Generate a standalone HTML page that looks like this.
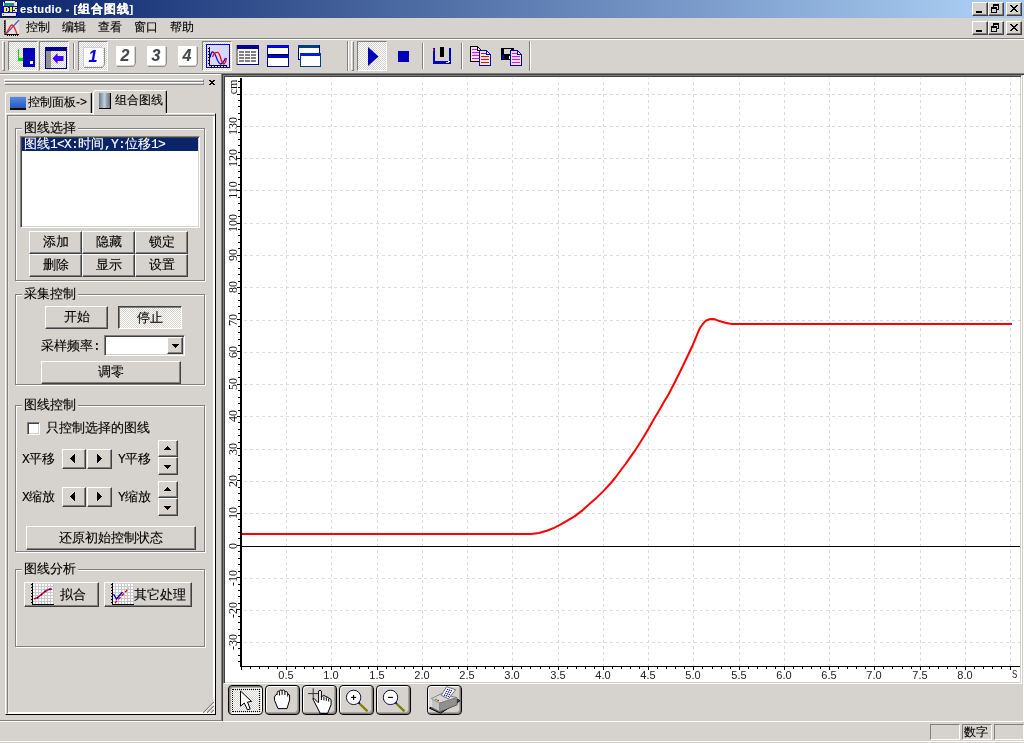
<!DOCTYPE html>
<html lang="zh"><head><meta charset="utf-8"><title>estudio - [组合图线]</title>
<style>
*{box-sizing:border-box;margin:0;padding:0}
html,body{width:1024px;height:743px;overflow:hidden;background:#d6d3ce}
body{position:relative;font-family:"Liberation Sans",sans-serif;font-size:12px;color:#000;line-height:1;-webkit-text-stroke:0.12px currentColor}
.a{position:absolute}
.t{position:absolute;white-space:nowrap;font-size:12px;line-height:12px;height:12px;overflow:visible}
.btn{position:absolute;background:#d6d3ce;border:1px solid;border-color:#fff #404040 #404040 #fff;box-shadow:inset -1px -1px 0 #808080;text-align:center;font-size:13px;white-space:nowrap;overflow:hidden}
.grp{position:absolute;border:1px solid #808080;box-shadow:1px 1px 0 #fff, inset 1px 1px 0 #fff}
.grp>span{position:absolute;left:6px;top:-8px;background:#d6d3ce;padding:0 2px 0 2px;font-size:13px;line-height:13px;white-space:nowrap}
.d{font-size:13px !important}
.m{font-family:"Liberation Mono",monospace;font-size:13px;letter-spacing:-0.8px}
.chk{background:repeating-conic-gradient(#fff 0 25%,#d6d3ce 0 50%) 0 0/2px 2px}
.tbp{position:absolute;border:1px solid;border-color:#808080 #fff #fff #808080}
.cap{position:absolute;width:16px;height:14px;background:#d6d3ce;border:1px solid;border-color:#fff #404040 #404040 #fff;box-shadow:inset -1px -1px 0 #808080}
.sep{position:absolute;width:2px;border-left:1px solid #808080;border-right:1px solid #fff}
.grip{position:absolute;width:3px;border:1px solid;border-color:#fff #808080 #808080 #fff}
.xl{-webkit-text-stroke:0;position:absolute;top:669px;width:40px;margin-left:-20px;text-align:center;font-size:11px;line-height:12px;color:#222}
.yl{-webkit-text-stroke:0;position:absolute;left:213px;width:40px;height:12px;margin-top:-6px;text-align:center;font-family:"Liberation Serif",serif;font-size:12px;line-height:12px;color:#111;transform:rotate(-90deg);transform-origin:50% 50%}
</style></head>
<body>
<div class="a" style="left:0;top:0;width:1024px;height:743px;will-change:transform">
<div class="a" style="left:0;top:0;width:1024px;height:18px;background:linear-gradient(90deg,#0a246a 0,#a6caf0 968px)"></div>
<svg class="a" style="left:2px;top:1px" width="16" height="16" viewBox="0 0 16 16" shape-rendering="crispEdges">
<rect x="0" y="1" width="16" height="14" fill="#0000a8"/><rect x="0" y="5" width="16" height="8" fill="#0000f8"/>
<rect x="3" y="0" width="10" height="2" fill="#f4f0e8"/><rect x="1" y="1" width="1" height="4" fill="#fff"/><rect x="14" y="1" width="1" height="4" fill="#fff"/>
<rect x="2" y="2" width="10" height="3" fill="#209080"/><rect x="12" y="1" width="2" height="4" fill="#e4dcd4"/><rect x="6" y="4" width="1" height="1" fill="#00ff00"/>
<path d="M2 6h4v1h1v3h-1v1h-4zM4 7v3h1v-3zM8 6h2v5h-2zM11 6h4v1h-2v1h2v3h-4v-1h2v-1h-2z" fill="#ffff00" fill-rule="evenodd"/>
<rect x="0" y="12" width="14" height="3" fill="#e8e4d8"/><rect x="1" y="13" width="1" height="1" fill="#00a000"/><rect x="1" y="15" width="13" height="1" fill="#101010"/></svg>
<div class="t" style="left:20px;top:3px;color:#fff;font-weight:bold;font-size:11px;letter-spacing:0.45px">estudio - [<span style="font-size:12px;letter-spacing:1px">组合图线</span>]</div>
<div class="cap" style="left:972px;top:2px"><div class="a" style="left:3px;top:8px;width:6px;height:2px;background:#000"></div></div><div class="cap" style="left:988px;top:2px"><div class="a" style="left:4px;top:1px;width:6px;height:6px;border:1px solid #000;border-top-width:2px"></div><div class="a" style="left:2px;top:4px;width:6px;height:6px;border:1px solid #000;border-top-width:2px;background:#d6d3ce"></div></div><div class="cap" style="left:1006px;top:2px"><svg class="a" style="left:3px;top:2px" width="8" height="7" viewBox="0 0 8 7" shape-rendering="crispEdges" fill="#000"><rect x="0" y="0" width="2" height="1"/><rect x="6" y="0" width="2" height="1"/><rect x="1" y="1" width="2" height="1"/><rect x="5" y="1" width="2" height="1"/><rect x="2" y="2" width="4" height="1"/><rect x="3" y="3" width="2" height="1"/><rect x="2" y="4" width="4" height="1"/><rect x="1" y="5" width="2" height="1"/><rect x="5" y="5" width="2" height="1"/><rect x="0" y="6" width="2" height="1"/><rect x="6" y="6" width="2" height="1"/></svg></div>
<svg class="a" style="left:4px;top:20px" width="16" height="16" viewBox="0 0 16 16">
<rect x="2" y="0" width="13" height="14" fill="#e4e2de"/><path d="M1 0v14.5h14" stroke="#000" stroke-width="1.2" fill="none"/><path d="M2 14L15 0" stroke="#5050c8" stroke-width="1.2"/><path d="M2 14C5 9 6 5 8 5s3 4 5 9" stroke="#f02020" stroke-width="1.3" fill="none"/>
<path d="M3 15.5h12" stroke="#000" stroke-dasharray="1 1"/><path d="M0.5 1v12" stroke="#000" stroke-dasharray="1 1"/></svg>
<div class="t" style="left:26px;top:21px">控制</div>
<div class="t" style="left:62px;top:21px">编辑</div>
<div class="t" style="left:98px;top:21px">查看</div>
<div class="t" style="left:134px;top:21px">窗口</div>
<div class="t" style="left:170px;top:21px">帮助</div>
<div class="cap" style="left:972px;top:21px"><div class="a" style="left:3px;top:8px;width:6px;height:2px;background:#000"></div></div><div class="cap" style="left:988px;top:21px"><div class="a" style="left:4px;top:1px;width:6px;height:6px;border:1px solid #000;border-top-width:2px"></div><div class="a" style="left:2px;top:4px;width:6px;height:6px;border:1px solid #000;border-top-width:2px;background:#d6d3ce"></div></div><div class="cap" style="left:1006px;top:21px"><svg class="a" style="left:3px;top:2px" width="8" height="7" viewBox="0 0 8 7" shape-rendering="crispEdges" fill="#000"><rect x="0" y="0" width="2" height="1"/><rect x="6" y="0" width="2" height="1"/><rect x="1" y="1" width="2" height="1"/><rect x="5" y="1" width="2" height="1"/><rect x="2" y="2" width="4" height="1"/><rect x="3" y="3" width="2" height="1"/><rect x="2" y="4" width="4" height="1"/><rect x="1" y="5" width="2" height="1"/><rect x="5" y="5" width="2" height="1"/><rect x="0" y="6" width="2" height="1"/><rect x="6" y="6" width="2" height="1"/></svg></div>
<div class="a" style="left:0;top:38px;width:1024px;height:1px;background:#808080"></div>
<div class="a" style="left:0;top:39px;width:1024px;height:1px;background:#fff"></div>
<div class="a" style="left:0;top:73px;width:1024px;height:1px;background:#808080"></div>
<div class="a" style="left:0;top:74px;width:221px;height:1px;background:#fff"></div>
<div class="grip" style="left:2px;top:41px;height:30px"></div>
<div class="sep" style="left:347px;top:41px;height:30px"></div>
<div class="grip" style="left:351px;top:41px;height:30px"></div>
<div class="sep" style="left:529px;top:41px;height:30px"></div>
<div class="tbp chk" style="left:8px;top:41px;width:30px;height:30px"></div>
<div class="tbp chk" style="left:39px;top:41px;width:30px;height:30px"></div>
<div class="tbp chk" style="left:78px;top:41px;width:30px;height:30px"></div>
<div class="tbp chk" style="left:202px;top:41px;width:30px;height:30px"></div>
<div class="tbp chk" style="left:357px;top:41px;width:30px;height:30px"></div>
<div class="sep" style="left:73px;top:43px;height:26px"></div>
<div class="sep" style="left:422px;top:43px;height:26px"></div>
<div class="sep" style="left:461px;top:43px;height:26px"></div>
<svg class="a" style="left:13px;top:45px" width="24" height="24" viewBox="0 0 24 24" shape-rendering="crispEdges">
<rect x="10" y="3" width="12" height="19" fill="#0000b4"/><rect x="17" y="16" width="3" height="3" fill="#fff"/>
<rect x="5" y="4" width="1" height="11" fill="#00e000"/><rect x="5" y="13" width="5" height="3" fill="#00e000"/></svg>
<svg class="a" style="left:44px;top:46px" width="24" height="23" viewBox="0 0 24 23">
<g shape-rendering="crispEdges"><rect x="1.500" y="1.500" width="21" height="21" fill="none" stroke="#00008c" stroke-width="1"/><rect x="1" y="1" width="22" height="4" fill="#00008c"/>
<rect x="2" y="5" width="5" height="17" fill="#909090"/></g><path d="M8.500 12.500l5-5.500v3h6v5h-6v3z" fill="#4000ff"/></svg>
<div class="a" style="left:83px;top:47px;width:22px;height:22px"><svg class="a" style="left:0;top:0" width="22" height="22" viewBox="0 0 22 22"><rect x="0" y="0" width="20" height="19" fill="#fff"/><path d="M21.5 1V17.500L19.5 20.500H1" stroke="#909090" fill="none"/><path d="M0.500 19V0.500H20" stroke="#ccccff" fill="none"/></svg><div class="a" style="left:0;top:0;width:20px;text-align:center;font:italic bold 16px/19px 'Liberation Sans',sans-serif;color:#0000e0">1</div></div>
<div class="a" style="left:116px;top:46px;width:22px;height:22px"><svg class="a" style="left:0;top:0" width="22" height="22" viewBox="0 0 22 22"><rect x="0" y="0" width="18" height="19" fill="#fff"/><path d="M19.5 1V17.500L17.5 20.500H1" stroke="#909090" fill="none"/></svg><div class="a" style="left:0;top:0;width:18px;text-align:center;font:italic bold 16px/19px 'Liberation Sans',sans-serif;color:#484848">2</div></div>
<div class="a" style="left:147px;top:46px;width:22px;height:22px"><svg class="a" style="left:0;top:0" width="22" height="22" viewBox="0 0 22 22"><rect x="0" y="0" width="18" height="19" fill="#fff"/><path d="M19.5 1V17.500L17.5 20.500H1" stroke="#909090" fill="none"/></svg><div class="a" style="left:0;top:0;width:18px;text-align:center;font:italic bold 16px/19px 'Liberation Sans',sans-serif;color:#484848">3</div></div>
<div class="a" style="left:178px;top:46px;width:22px;height:22px"><svg class="a" style="left:0;top:0" width="22" height="22" viewBox="0 0 22 22"><rect x="0" y="0" width="18" height="19" fill="#fff"/><path d="M19.5 1V17.500L17.5 20.500H1" stroke="#909090" fill="none"/></svg><div class="a" style="left:0;top:0;width:18px;text-align:center;font:italic bold 16px/19px 'Liberation Sans',sans-serif;color:#484848">4</div></div>
<svg class="a" style="left:206px;top:44px" width="24" height="24" viewBox="0 0 24 24">
<rect x="0.500" y="0.500" width="23" height="23" fill="#d8d8ff" stroke="#0000d0"/><path d="M3.500 3V21.500H21" stroke="#000" stroke-width="1" fill="none" shape-rendering="crispEdges"/><path d="M2.500 4V20M5 22.500H21" stroke="#000" stroke-width="1" stroke-dasharray="1 2" shape-rendering="crispEdges"/>
<path d="M4 13.500C5 9 6 7.500 7 8C10 9 11 19 14.500 20C17 20 18 17 19.500 14" stroke="#0000e0" stroke-width="1.300" fill="none"/><path d="M6.500 13C8 9 10 8 12 8.500C14.500 10 15 19 17.500 20C19 20 20 17 20.500 14" stroke="#f00000" stroke-width="1.300" fill="none"/></svg>
<svg class="a" style="left:236px;top:45px" width="24" height="21" viewBox="0 0 24 21" shape-rendering="crispEdges"><rect x="0" y="0" width="23" height="20" fill="#909090"/><rect x="1" y="0" width="22" height="4" fill="#00008c"/><rect x="2" y="4" width="20" height="15" fill="#fff"/><rect x="22" y="4" width="1" height="16" fill="#00008c"/><rect x="1" y="19" width="22" height="1" fill="#00008c"/><rect x="3" y="6" width="5" height="2" fill="#808080"/><rect x="9" y="6" width="5" height="2" fill="#808080"/><rect x="15" y="6" width="5" height="2" fill="#808080"/><rect x="3" y="9" width="5" height="2" fill="#808080"/><rect x="9" y="9" width="5" height="2" fill="#808080"/><rect x="15" y="9" width="5" height="2" fill="#808080"/><rect x="3" y="12" width="5" height="2" fill="#808080"/><rect x="9" y="12" width="5" height="2" fill="#808080"/><rect x="15" y="12" width="5" height="2" fill="#808080"/><rect x="3" y="15" width="5" height="2" fill="#808080"/><rect x="9" y="15" width="5" height="2" fill="#808080"/><rect x="15" y="15" width="5" height="2" fill="#808080"/></svg>
<svg class="a" style="left:267px;top:45px" width="23" height="23" viewBox="0 0 23 23" shape-rendering="crispEdges">
<rect x="0" y="0" width="22" height="22" fill="#00008c"/><rect x="0" y="0" width="22" height="3" fill="#0000e0"/><rect x="1" y="3" width="20" height="6" fill="#fff"/>
<rect x="0" y="9" width="22" height="1" fill="#000"/><rect x="0" y="10" width="22" height="3" fill="#0000e0"/><rect x="1" y="13" width="20" height="8" fill="#fff"/></svg>
<svg class="a" style="left:298px;top:45px" width="24" height="23" viewBox="0 0 24 23" shape-rendering="crispEdges">
<rect x="0" y="0" width="21" height="14" fill="#fff" stroke="#00008c"/><rect x="0" y="0" width="21" height="3" fill="#004080"/>
<rect x="2" y="8" width="21" height="14" fill="#fff"/><rect x="2" y="8" width="21" height="3" fill="#0020d0"/><path d="M2.5 8v13.5h20v-13.5" stroke="#004080" fill="none"/></svg>
<svg class="a" style="left:367px;top:47px" width="14" height="20" viewBox="0 0 14 20"><path d="M1 0L11.500 9.500L1 19z" fill="#0000b4"/></svg>
<div class="a" style="left:398px;top:51px;width:11px;height:11px;background:#0000b4"></div>
<svg class="a" style="left:432px;top:46px" width="20" height="19" viewBox="0 0 20 19" shape-rendering="crispEdges">
<rect x="1" y="2" width="2" height="16" fill="#0000b4"/><rect x="17" y="2" width="2" height="16" fill="#0000b4"/><rect x="1" y="15" width="18" height="3" fill="#0000b4"/>
<rect x="1" y="3" width="1" height="2" fill="#e00060"/><rect x="8" y="1" width="4" height="10" fill="#000"/><rect x="14" y="16" width="3" height="1" fill="#d0d0d0"/><rect x="16" y="15" width="2" height="1" fill="#fff"/></svg>
<svg class="a" style="left:470px;top:46px" width="24" height="22" viewBox="0 0 24 22" shape-rendering="crispEdges"><g transform="translate(0,0)"><path d="M0.500 0.500h7l4 4v11h-11z" fill="#ece9e2" stroke="#000"/><path d="M7.500 0.500v4h4" fill="none" stroke="#000"/><rect x="2" y="3" width="5" height="1" fill="#ff00ff"/><rect x="2" y="6" width="8" height="1" fill="#ff00ff"/><rect x="2" y="9" width="8" height="1" fill="#ff00ff"/><rect x="2" y="12" width="8" height="1" fill="#ff00ff"/></g><g transform="translate(9,4)"><path d="M0.500 0.500h7l4 4v11h-11z" fill="#ece9e2" stroke="#0000c0"/><path d="M7.500 0.500v4h4" fill="none" stroke="#0000c0"/><rect x="2" y="3" width="5" height="1" fill="#ff0000"/><rect x="2" y="6" width="8" height="1" fill="#ff0000"/><rect x="2" y="9" width="8" height="1" fill="#ff0000"/><rect x="2" y="12" width="8" height="1" fill="#ff0000"/></g></svg>
<svg class="a" style="left:501px;top:48px" width="24" height="20" viewBox="0 0 24 20" shape-rendering="crispEdges"><rect x="0" y="0" width="13" height="12" fill="#000"/><rect x="3" y="1" width="7" height="5" fill="#d6d3ce"/><rect x="1" y="7" width="2" height="4" fill="#0000e0"/><rect x="8" y="8" width="3" height="3" fill="#fff"/><g transform="translate(9,2)"><path d="M0.500 0.500h7l4 4v11h-11z" fill="#ece9e2" stroke="#0000c0"/><path d="M7.500 0.500v4h4" fill="none" stroke="#0000c0"/><rect x="2" y="3" width="5" height="1" fill="#ff00ff"/><rect x="2" y="6" width="8" height="1" fill="#ff00ff"/><rect x="2" y="9" width="8" height="1" fill="#ff00ff"/><rect x="2" y="12" width="8" height="1" fill="#ff00ff"/></g></svg>
<div class="a" style="left:4px;top:79px;width:200px;height:3px;border:1px solid;border-color:#fff #808080 #808080 #fff"></div>
<div class="a" style="left:4px;top:82px;width:200px;height:3px;border:1px solid;border-color:#fff #808080 #808080 #fff"></div>
<svg class="a" style="left:209px;top:80px" width="6" height="5" viewBox="0 0 6 5" shape-rendering="crispEdges" fill="#000"><rect x="0" y="0" width="2" height="1"/><rect x="4" y="0" width="2" height="1"/><rect x="1" y="1" width="4" height="1"/><rect x="2" y="2" width="2" height="1"/><rect x="1" y="3" width="4" height="1"/><rect x="0" y="4" width="2" height="1"/><rect x="4" y="4" width="2" height="1"/></svg>
<div class="a" style="left:5px;top:113px;width:211px;height:602px;border:1px solid;border-color:#fff #000 #000 #fff"></div>
<div class="a" style="left:7px;top:115px;width:208px;height:599px;border:1px solid;border-color:#808080 #fff #fff #808080;box-shadow:inset -1px -1px 0 #fff,inset 1px 1px 0 #e4e1da"></div>
<div class="a" style="left:5px;top:92px;width:87px;height:21px;border:1px solid;border-color:#fff #000 transparent #fff;border-bottom:none;border-radius:3px 2px 0 0;box-shadow:inset -1px 0 0 #a0a0a0"></div>
<div class="a" style="left:10px;top:96px;width:16px;height:14px;background:linear-gradient(#5a8ae0,#3a6cd0 60%,#2a5cc0);border-bottom:2px solid #101010;border-top:1px solid #c8c8c8"></div>
<div class="t" style="left:28px;top:96px">控制面板-&gt;</div>
<div class="a" style="left:93px;top:90px;width:74px;height:23px;background:#d6d3ce;border:1px solid;border-color:#fff #000 transparent #fff;border-bottom:none;border-radius:3px 2px 0 0;box-shadow:inset -1px 0 0 #a0a0a0"></div>
<div class="a" style="left:93px;top:113px;width:73px;height:2px;background:#d6d3ce;border-left:1px solid #fff"></div>
<div class="a" style="left:93px;top:115px;width:74px;height:1px;background:#808080"></div>
<div class="a" style="left:99px;top:93px;width:12px;height:16px;background:linear-gradient(90deg,#6c7888,#a8b8c4 35%,#c4d0d8 50%,#a0acb8 65%,#687484);border-bottom:1px solid #000;border-right:1px solid #000"></div>
<div class="t" style="left:115px;top:94px">组合图线</div>
<div class="grp" style="left:15px;top:128px;width:190px;height:153px"><span>图线选择</span></div>
<div class="a" style="left:20px;top:136px;width:180px;height:92px;background:#fff;border:1px solid;border-color:#808080 #fff #fff #808080;box-shadow:inset 1px 1px 0 #404040, inset -1px -1px 0 #d6d3ce"></div>
<div class="a" style="left:22px;top:138px;width:176px;height:13px;background:#0a246a"></div>
<div class="t d" style="left:24px;top:138px;color:#fff">图线<span class="m">1&lt;X:</span>时间<span class="m">,Y:</span>位移<span class="m">1&gt;</span></div>
<div class="btn" style="left:29px;top:231px;width:53px;height:23px;line-height:20px">添加</div>
<div class="btn" style="left:82px;top:231px;width:53px;height:23px;line-height:20px">隐藏</div>
<div class="btn" style="left:135px;top:231px;width:53px;height:23px;line-height:20px">锁定</div>
<div class="btn" style="left:29px;top:254px;width:53px;height:23px;line-height:20px">删除</div>
<div class="btn" style="left:82px;top:254px;width:53px;height:23px;line-height:20px">显示</div>
<div class="btn" style="left:135px;top:254px;width:53px;height:23px;line-height:20px">设置</div>
<div class="grp" style="left:15px;top:294px;width:190px;height:91px"><span>采集控制</span></div>
<div class="btn" style="left:45px;top:306px;width:63px;height:23px;line-height:20px">开始</div>
<div class="btn chk" style="left:118px;top:306px;width:64px;height:23px;line-height:21px;border-color:#404040 #fff #fff #404040;box-shadow:inset 1px 1px 0 #808080">停止</div>
<div class="t d" style="left:41px;top:340px">采样频率<span class="m">:</span></div>
<div class="a" style="left:104px;top:335px;width:81px;height:21px;background:#fff;border:1px solid;border-color:#808080 #fff #fff #808080;box-shadow:inset 1px 1px 0 #404040, inset -1px -1px 0 #d6d3ce"></div>
<div class="btn" style="left:167px;top:337px;width:16px;height:17px"><svg class="a" style="left:4px;top:6px" width="7" height="4" viewBox="0 0 7 4" shape-rendering="crispEdges" fill="#000"><rect x="0" y="0" width="7" height="1"/><rect x="1" y="1" width="5" height="1"/><rect x="2" y="2" width="3" height="1"/><rect x="3" y="3" width="1" height="1"/></svg></div>
<div class="btn" style="left:41px;top:361px;width:140px;height:23px;line-height:20px">调零</div>
<div class="grp" style="left:15px;top:405px;width:190px;height:147px"><span>图线控制</span></div>
<div class="a" style="left:27px;top:422px;width:13px;height:13px;background:#fff;border:1px solid;border-color:#808080 #fff #fff #808080;box-shadow:inset 1px 1px 0 #404040, inset -1px -1px 0 #d6d3ce"></div>
<div class="t d" style="left:46px;top:422px">只控制选择的图线</div>
<div class="t d" style="left:22px;top:453px"><span class="m">X</span>平移</div>
<div class="t d" style="left:118px;top:453px"><span class="m">Y</span>平移</div>
<div class="btn" style="left:62px;top:449px;width:24px;height:20px"><svg class="a" style="left:7px;top:4px" width="5" height="9" viewBox="0 0 5 9" shape-rendering="crispEdges" fill="#000"><rect x="4" y="0" width="1" height="1"/><rect x="3" y="1" width="2" height="1"/><rect x="2" y="2" width="3" height="1"/><rect x="1" y="3" width="4" height="1"/><rect x="0" y="4" width="5" height="1"/><rect x="1" y="5" width="4" height="1"/><rect x="2" y="6" width="3" height="1"/><rect x="3" y="7" width="2" height="1"/><rect x="4" y="8" width="1" height="1"/></svg></div>
<div class="btn" style="left:87px;top:449px;width:25px;height:20px"><svg class="a" style="left:9px;top:4px" width="5" height="9" viewBox="0 0 5 9" shape-rendering="crispEdges" fill="#000"><rect x="0" y="0" width="1" height="1"/><rect x="0" y="1" width="2" height="1"/><rect x="0" y="2" width="3" height="1"/><rect x="0" y="3" width="4" height="1"/><rect x="0" y="4" width="5" height="1"/><rect x="0" y="5" width="4" height="1"/><rect x="0" y="6" width="3" height="1"/><rect x="0" y="7" width="2" height="1"/><rect x="0" y="8" width="1" height="1"/></svg></div>
<div class="btn" style="left:158px;top:440px;width:20px;height:17px"><svg class="a" style="left:5px;top:5px" width="7" height="4" viewBox="0 0 7 4" shape-rendering="crispEdges" fill="#000"><rect x="3" y="0" width="1" height="1"/><rect x="2" y="1" width="3" height="1"/><rect x="1" y="2" width="5" height="1"/><rect x="0" y="3" width="7" height="1"/></svg></div>
<div class="btn" style="left:158px;top:457px;width:20px;height:18px"><svg class="a" style="left:5px;top:7px" width="7" height="4" viewBox="0 0 7 4" shape-rendering="crispEdges" fill="#000"><rect x="0" y="0" width="7" height="1"/><rect x="1" y="1" width="5" height="1"/><rect x="2" y="2" width="3" height="1"/><rect x="3" y="3" width="1" height="1"/></svg></div>
<div class="t d" style="left:22px;top:491px"><span class="m">X</span>缩放</div>
<div class="t d" style="left:118px;top:491px"><span class="m">Y</span>缩放</div>
<div class="btn" style="left:62px;top:487px;width:24px;height:20px"><svg class="a" style="left:7px;top:4px" width="5" height="9" viewBox="0 0 5 9" shape-rendering="crispEdges" fill="#000"><rect x="4" y="0" width="1" height="1"/><rect x="3" y="1" width="2" height="1"/><rect x="2" y="2" width="3" height="1"/><rect x="1" y="3" width="4" height="1"/><rect x="0" y="4" width="5" height="1"/><rect x="1" y="5" width="4" height="1"/><rect x="2" y="6" width="3" height="1"/><rect x="3" y="7" width="2" height="1"/><rect x="4" y="8" width="1" height="1"/></svg></div>
<div class="btn" style="left:87px;top:487px;width:25px;height:20px"><svg class="a" style="left:9px;top:4px" width="5" height="9" viewBox="0 0 5 9" shape-rendering="crispEdges" fill="#000"><rect x="0" y="0" width="1" height="1"/><rect x="0" y="1" width="2" height="1"/><rect x="0" y="2" width="3" height="1"/><rect x="0" y="3" width="4" height="1"/><rect x="0" y="4" width="5" height="1"/><rect x="0" y="5" width="4" height="1"/><rect x="0" y="6" width="3" height="1"/><rect x="0" y="7" width="2" height="1"/><rect x="0" y="8" width="1" height="1"/></svg></div>
<div class="btn" style="left:158px;top:481px;width:20px;height:17px"><svg class="a" style="left:5px;top:5px" width="7" height="4" viewBox="0 0 7 4" shape-rendering="crispEdges" fill="#000"><rect x="3" y="0" width="1" height="1"/><rect x="2" y="1" width="3" height="1"/><rect x="1" y="2" width="5" height="1"/><rect x="0" y="3" width="7" height="1"/></svg></div>
<div class="btn" style="left:158px;top:498px;width:20px;height:18px"><svg class="a" style="left:5px;top:7px" width="7" height="4" viewBox="0 0 7 4" shape-rendering="crispEdges" fill="#000"><rect x="0" y="0" width="7" height="1"/><rect x="1" y="1" width="5" height="1"/><rect x="2" y="2" width="3" height="1"/><rect x="3" y="3" width="1" height="1"/></svg></div>
<div class="btn" style="left:26px;top:526px;width:170px;height:24px;line-height:22px">还原初始控制状态</div>
<div class="grp" style="left:15px;top:569px;width:190px;height:78px"><span>图线分析</span></div>
<div class="btn" style="left:24px;top:582px;width:75px;height:25px;line-height:23px"><svg class="a" style="left:6px;top:0px" width="23" height="23" viewBox="0 0 23 23"><rect x="2" y="1" width="21" height="20" fill="#fff"/><path d="M2 3.500h21M2 6.500h21M2 9.500h21M2 12.500h21M2 15.500h21M2 18.500h21M4.500 1v20M7.500 1v20M10.500 1v20M13.500 1v20M16.500 1v20M19.500 1v20M22.500 1v20" stroke="#c8c8cc" stroke-width="1" shape-rendering="crispEdges"/><path d="M1.500 0v21.500h21" stroke="#000" stroke-width="1" fill="none" shape-rendering="crispEdges"/><path d="M0.500 1v20" stroke="#000" stroke-width="1" stroke-dasharray="1 2" shape-rendering="crispEdges"/><path d="M3 16c4-1 6-3 8-5s5-5 10-5" stroke="#e80000" stroke-width="1.600" fill="none"/><path d="M3 16c4-1 6-3 8-5s5-5 10-5" stroke="#0000e0" stroke-width="1.600" fill="none" stroke-dasharray="1.500 3.500" stroke-dashoffset="-3"/></svg><span class="a" style="left:35px;top:0">拟合</span></div>
<div class="btn" style="left:104px;top:582px;width:88px;height:25px;line-height:23px"><svg class="a" style="left:6px;top:0px" width="23" height="23" viewBox="0 0 23 23"><rect x="2" y="1" width="21" height="20" fill="#fff"/><path d="M2 3.500h21M2 6.500h21M2 9.500h21M2 12.500h21M2 15.500h21M2 18.500h21M4.500 1v20M7.500 1v20M10.500 1v20M13.500 1v20M16.500 1v20M19.500 1v20M22.500 1v20" stroke="#c8c8cc" stroke-width="1" shape-rendering="crispEdges"/><path d="M1.500 0v21.500h21" stroke="#000" stroke-width="1" fill="none" shape-rendering="crispEdges"/><path d="M0.500 1v20" stroke="#000" stroke-width="1" stroke-dasharray="1 2" shape-rendering="crispEdges"/><path d="M4 20L18 5" stroke="#e80000" stroke-width="1.300" stroke-dasharray="3 2"/><path d="M2.500 11l3 5 6-7" stroke="#0000e0" stroke-width="1.400" fill="none"/></svg><span class="a" style="left:29px;top:0">其它处理</span></div>
<svg class="a" style="left:203px;top:702px" width="11" height="11" viewBox="0 0 11 11"><path d="M11 0L0 11M11 4L4 11M11 8L8 11" stroke="#808080" stroke-width="1.2"/><path d="M11 1.2L1.2 11M11 5.2L5.2 11M11 9.2L9.2 11" stroke="#fff" stroke-width="0.8"/></svg>
<div class="a" style="left:221px;top:74px;width:1px;height:647px;background:#808080"></div>
<div class="a" style="left:0;top:720px;width:222px;height:1px;background:#808080"></div>
<div class="a" style="left:222px;top:74px;width:802px;height:1px;background:#404040"></div>
<div class="a" style="left:222px;top:74px;width:1px;height:647px;background:#404040"></div>
<div class="a" style="left:1023px;top:75px;width:1px;height:647px;background:#fff"></div>
<div class="a" style="left:223px;top:75px;width:799px;height:609px;background:#fff;border:1px solid;border-color:#808080 #fff #fff #808080;box-shadow:inset 1px 1px 0 #404040,inset -1px -1px 0 #d6d3ce"></div>
<svg class="a" style="left:0;top:0" width="1024" height="743" viewBox="0 0 1024 743"><path d="M286.5 78V666M331.5 78V666M377.5 78V666M422.5 78V666M467.5 78V666M512.5 78V666M558.5 78V666M603.5 78V666M648.5 78V666M693.5 78V666M739.5 78V666M784.5 78V666M829.5 78V666M874.5 78V666M920.5 78V666M965.5 78V666M1010.5 78V666" stroke="#dcdcdc" stroke-width="1" stroke-dasharray="3 3" stroke-dashoffset="2" fill="none" shape-rendering="crispEdges"/><path d="M242 642.5H1020M242 610.5H1020M242 578.5H1020M242 513.5H1020M242 481.5H1020M242 449.5H1020M242 416.5H1020M242 384.5H1020M242 352.5H1020M242 320.5H1020M242 287.5H1020M242 255.5H1020M242 223.5H1020M242 190.5H1020M242 158.5H1020M242 126.5H1020M242 94.5H1020" stroke="#dcdcdc" stroke-width="1" stroke-dasharray="3 3" stroke-dashoffset="4" fill="none" shape-rendering="crispEdges"/><path d="M242 546.5H1020" stroke="#000" stroke-width="1" shape-rendering="crispEdges"/><path d="M241 78V667" stroke="#000" stroke-width="2" fill="none" shape-rendering="crispEdges"/><path d="M240 666.5H1020" stroke="#000" stroke-width="1" fill="none" shape-rendering="crispEdges"/><path d="M238 661.5H240M238 655.5H240M238 648.5H240M237 642.5H240M238 635.5H240M238 629.5H240M238 622.5H240M238 616.5H240M237 609.5H240M238 603.5H240M238 596.5H240M238 590.5H240M238 584.5H240M237 577.5H240M238 571.5H240M238 564.5H240M238 558.5H240M238 551.5H240M237 545.5H240M238 538.5H240M238 532.5H240M238 526.5H240M238 519.5H240M237 513.5H240M238 506.5H240M238 500.5H240M238 493.5H240M238 487.5H240M237 480.5H240M238 474.5H240M238 468.5H240M238 461.5H240M238 455.5H240M237 448.5H240M238 442.5H240M238 435.5H240M238 429.5H240M238 422.5H240M237 416.5H240M238 410.5H240M238 403.5H240M238 397.5H240M238 390.5H240M237 384.5H240M238 377.5H240M238 371.5H240M238 364.5H240M238 358.5H240M237 351.5H240M238 345.5H240M238 339.5H240M238 332.5H240M238 326.5H240M237 319.5H240M238 313.5H240M238 306.5H240M238 300.5H240M238 293.5H240M237 287.5H240M238 281.5H240M238 274.5H240M238 268.5H240M238 261.5H240M237 255.5H240M238 248.5H240M238 242.5H240M238 235.5H240M238 229.5H240M237 223.5H240M238 216.5H240M238 210.5H240M238 203.5H240M238 197.5H240M237 190.5H240M238 184.5H240M238 177.5H240M238 171.5H240M238 165.5H240M237 158.5H240M238 152.5H240M238 145.5H240M238 139.5H240M238 132.5H240M237 126.5H240M238 119.5H240M238 113.5H240M238 106.5H240M238 100.5H240M237 94.5H240M238 87.5H240M238 81.5H240M241.5 667V670M250.5 667V669M259.5 667V669M268.5 667V669M277.5 667V669M286.5 667V670M295.5 667V669M304.5 667V669M313.5 667V669M322.5 667V669M331.5 667V670M340.5 667V669M350.5 667V669M359.5 667V669M368.5 667V669M377.5 667V670M386.5 667V669M395.5 667V669M404.5 667V669M413.5 667V669M422.5 667V670M431.5 667V669M440.5 667V669M449.5 667V669M458.5 667V669M467.5 667V670M476.5 667V669M485.5 667V669M494.5 667V669M503.5 667V669M512.5 667V670M521.5 667V669M530.5 667V669M540.5 667V669M549.5 667V669M558.5 667V670M567.5 667V669M576.5 667V669M585.5 667V669M594.5 667V669M603.5 667V670M612.5 667V669M621.5 667V669M630.5 667V669M639.5 667V669M648.5 667V670M657.5 667V669M666.5 667V669M675.5 667V669M684.5 667V669M693.5 667V670M702.5 667V669M712.5 667V669M721.5 667V669M730.5 667V669M739.5 667V670M748.5 667V669M757.5 667V669M766.5 667V669M775.5 667V669M784.5 667V670M793.5 667V669M802.5 667V669M811.5 667V669M820.5 667V669M829.5 667V670M838.5 667V669M847.5 667V669M856.5 667V669M865.5 667V669M874.5 667V670M883.5 667V669M892.5 667V669M902.5 667V669M911.5 667V669M920.5 667V670M929.5 667V669M938.5 667V669M947.5 667V669M956.5 667V669M965.5 667V670M974.5 667V669M983.5 667V669M992.5 667V669M1001.5 667V669M1010.5 667V670" stroke="#000" stroke-width="1" fill="none" shape-rendering="crispEdges"/><path d="M242 534 L531 534 L539 533 L547.5 530.5 L554 527.8 L560 524.8 L567.3 520.6 L574.5 516.4 L581.8 510.9 L589.1 504.2 L596.4 497.9 L603.6 490.9 L610.9 483 L615.8 477 L620.6 470.5 L625.5 464 L630.3 457.2 L635.2 450.3 L639.4 443.8 L643.6 437 L648.5 428.8 L654 419 L660 409 L663.6 402.6 L668.5 394.5 L673 385.7 L675.8 380.3 L682.5 366.8 L692 346.8 L697.4 333.8 L700 328 L702.6 324.2 L705 321.5 L707 320.2 L709.5 319.2 L712.3 318.9 L715 319.3 L717.5 320.4 L721 321.5 L725.4 322.8 L729 323.6 L732 324 L1012 324" stroke="#ff0000" stroke-width="2" fill="none" stroke-linejoin="round"/></svg>
<div class="xl" style="left:286px">0.5</div>
<div class="xl" style="left:331px">1.0</div>
<div class="xl" style="left:377px">1.5</div>
<div class="xl" style="left:422px">2.0</div>
<div class="xl" style="left:467px">2.5</div>
<div class="xl" style="left:512px">3.0</div>
<div class="xl" style="left:558px">3.5</div>
<div class="xl" style="left:603px">4.0</div>
<div class="xl" style="left:648px">4.5</div>
<div class="xl" style="left:693px">5.0</div>
<div class="xl" style="left:739px">5.5</div>
<div class="xl" style="left:784px">6.0</div>
<div class="xl" style="left:829px">6.5</div>
<div class="xl" style="left:874px">7.0</div>
<div class="xl" style="left:920px">7.5</div>
<div class="xl" style="left:965px">8.0</div>
<div class="xl" style="left:1012px;top:668px;margin-left:0;width:auto;transform:scaleX(.72);transform-origin:0 0">S</div>
<div class="yl" style="top:642px">-30</div>
<div class="yl" style="top:610px">-20</div>
<div class="yl" style="top:578px">-10</div>
<div class="yl" style="top:546px">0</div>
<div class="yl" style="top:513px">10</div>
<div class="yl" style="top:481px">20</div>
<div class="yl" style="top:449px">30</div>
<div class="yl" style="top:416px">40</div>
<div class="yl" style="top:384px">50</div>
<div class="yl" style="top:352px">60</div>
<div class="yl" style="top:320px">70</div>
<div class="yl" style="top:287px">80</div>
<div class="yl" style="top:255px">90</div>
<div class="yl" style="top:223px">100</div>
<div class="yl" style="top:190px">110</div>
<div class="yl" style="top:158px">120</div>
<div class="yl" style="top:126px">130</div>
<div class="yl" style="top:87px">cm</div>
<div class="a chk" style="left:228px;top:685px;width:35px;height:30px;border-radius:4px;border:1px solid #000;box-shadow:inset 1px 1px 0 #808080,inset 2px 2px 0 #b0aca4,inset -1px -1px 0 #fff"></div>
<div class="a" style="left:265px;top:685px;width:35px;height:30px;border-radius:4px;border:1px solid #000;box-shadow:inset 1px 1px 0 #fff,inset -1px -1px 0 #808080,inset -2px -2px 0 #a8a49c"></div>
<div class="a" style="left:302px;top:685px;width:35px;height:30px;border-radius:4px;border:1px solid #000;box-shadow:inset 1px 1px 0 #fff,inset -1px -1px 0 #808080,inset -2px -2px 0 #a8a49c"></div>
<div class="a" style="left:339px;top:685px;width:35px;height:30px;border-radius:4px;border:1px solid #000;box-shadow:inset 1px 1px 0 #fff,inset -1px -1px 0 #808080,inset -2px -2px 0 #a8a49c"></div>
<div class="a" style="left:376px;top:685px;width:35px;height:30px;border-radius:4px;border:1px solid #000;box-shadow:inset 1px 1px 0 #fff,inset -1px -1px 0 #808080,inset -2px -2px 0 #a8a49c"></div>
<div class="a" style="left:427px;top:685px;width:35px;height:30px;border-radius:4px;border:1px solid #000;box-shadow:inset 1px 1px 0 #fff,inset -1px -1px 0 #808080,inset -2px -2px 0 #a8a49c"></div>
<div class="a" style="left:232px;top:689px;width:28px;height:23px;border:1px dotted #000"></div>
<svg class="a" style="left:239px;top:690px" width="14" height="21" viewBox="0 0 14 21"><path d="M1.500 1V16.200L5.300 13L8.400 19.800L11.200 19L8.500 12L12.500 11.500z" fill="#fff" stroke="#000" stroke-width="1"/></svg>
<svg class="a" style="left:262px;top:682px" width="80" height="36" viewBox="0 0 80 36">
<path d="M16 26.600L12.600 18.500L12.400 15L14 12.500L15.200 12.500L15.200 10.500Q15.200 9.200 16.400 9.200Q17.400 9.200 17.400 10.500L17.400 9.200Q17.600 8 18.800 8Q20 8 20 9.200L20.200 9Q20.400 8 21.600 8Q22.800 8 22.800 9.400L23 10Q23.400 9.400 24.400 9.600Q25.600 10 25.600 11.200L25.800 12L27.600 13L27.600 18L25 26.600z" fill="#fff" stroke="#000" stroke-width="1" stroke-linejoin="round"/>
<path d="M17.400 10.500V13.500M20.100 9.200V12.800M22.900 9.600V13M25.700 11.500V14.500" stroke="#000" stroke-width="1"/><path d="M16 26.600h2" stroke="#0000c0" stroke-width="1"/>
<path d="M46.100 11.600H56.300M51.200 6.300V16.800" stroke="#303040" stroke-width="1"/>
<path d="M56.600 20.300V9L58 8.200L59.400 9V14.800L61.700 13.300L64 14.500L66.400 15.600L69.100 17.600V22.700L65.600 31.300H58.200L50.800 16.800L52 16.400L55.900 20.500z" fill="#fff" stroke="#000" stroke-width="1" stroke-linejoin="round"/>
<path d="M59.400 14V18M61.900 14.500V18.400M64.300 15.200V18.750M66.700 16.400V19.500" stroke="#000" stroke-width="1"/><path d="M57.500 31.500H65.600" stroke="#000" stroke-width="1.200"/><path d="M57.500 31.500h2" stroke="#0000c0" stroke-width="1.200"/></svg>
<svg class="a" style="left:336px;top:682px" width="80" height="36" viewBox="0 0 80 36"><path d="M23.400000000000002 21.500L31.6 29.300" stroke="#808000" stroke-width="2.400"/><path d="M20.6 19.100L24.0 19.400L24.0 22L21.400000000000002 21.800z" fill="#000090"/><circle cx="17.6" cy="15.400" r="7.200" fill="#fff" stroke="#101030" stroke-width="1"/><path d="M15.100000000000001 15.400h5" stroke="#000" stroke-width="1.100"/><path d="M17.6 12.900v5" stroke="#000" stroke-width="1.100"/><path d="M60.3 21.500L68.5 29.300" stroke="#808000" stroke-width="2.400"/><path d="M57.5 19.100L60.9 19.400L60.9 22L58.3 21.800z" fill="#000090"/><circle cx="54.5" cy="15.400" r="7.200" fill="#fff" stroke="#101030" stroke-width="1"/><path d="M52.0 15.400h5" stroke="#000" stroke-width="1.100"/></svg>
<svg class="a" style="left:410px;top:682px" width="80" height="36" viewBox="0 0 80 36">
<path d="M19.500 26.200L30.500 31.250L50 18.750L46.900 17V22.700L29.700 29.700L21.100 25z" fill="#606060" stroke="#000" stroke-width="1" stroke-linejoin="round"/>
<path d="M21.100 16.800L31.250 11.700L46.900 15.600L29.700 21.100z" fill="#d8d8d8" stroke="#707070" stroke-width="0.800"/>
<path d="M21.100 16.800L29.700 21.100V29.700L21.100 25z" fill="#c4c4c4" stroke="#808080" stroke-width="0.600"/>
<path d="M29.700 21.100L46.900 15.600V22.700L29.700 29.700z" fill="#909090" stroke="#707070" stroke-width="0.600"/>
<path d="M21.100 16.800V25" stroke="#fff" stroke-width="1"/>
<path d="M31.250 13.300L36.700 4.700L45.700 7.800L38.300 16.800z" fill="#fff" stroke="#505050" stroke-width="0.800"/>
<path d="M37 7.300L42 8.900M36 9.200L41 10.800M35 11.100L40 12.700M34 13L39 14.600" stroke="#0000b0" stroke-width="1.100" stroke-dasharray="1.300 0.700"/>
<rect x="25" y="16.800" width="1.800" height="1.200" fill="#00d000"/><rect x="27.200" y="17.900" width="1.800" height="1.200" fill="#f00000"/></svg>
<div class="a" style="left:0;top:721px;width:1024px;height:1px;background:#fff"></div>
<div class="a" style="left:930px;top:724px;width:30px;height:16px;border:1px solid;border-color:#808080 #fff #fff #808080"></div>
<div class="a" style="left:962px;top:724px;width:30px;height:16px;border:1px solid;border-color:#808080 #fff #fff #808080"></div>
<div class="a" style="left:994px;top:724px;width:30px;height:16px;border:1px solid;border-color:#808080 #fff #fff #808080"></div>
<div class="t" style="left:964px;top:726px">数字</div>
<div class="a" style="left:0;top:741px;width:1024px;height:1px;background:#fff"></div>
</div>
</body></html>
